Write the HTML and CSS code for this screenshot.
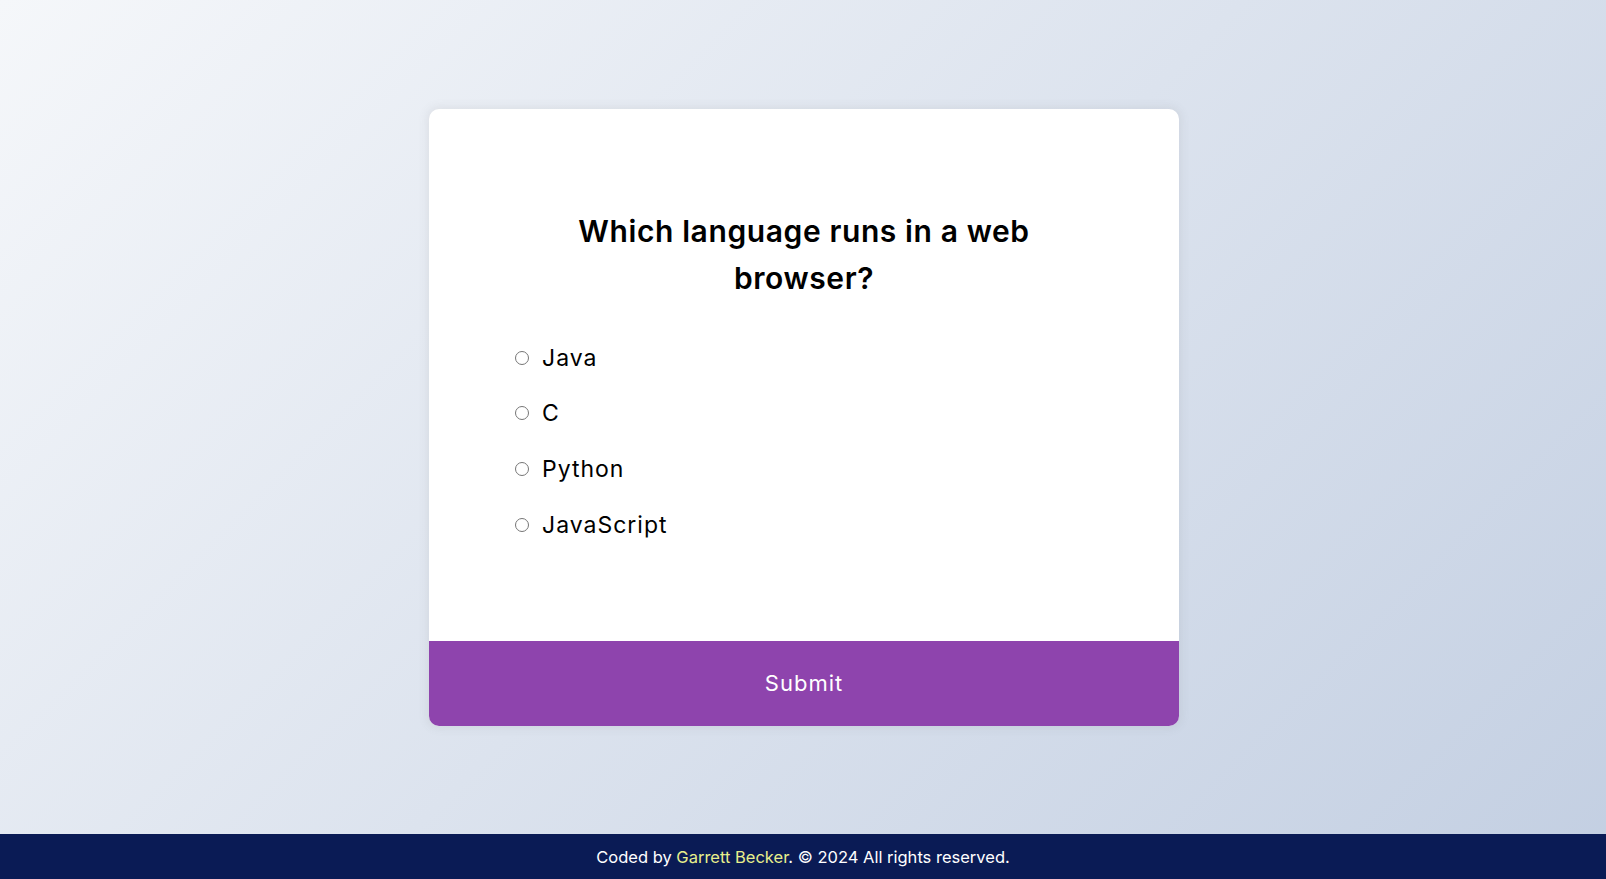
FILE: index.html
```html
<!DOCTYPE html>
<html lang="en">
<head>
<meta charset="UTF-8">
<title>Quiz App</title>
<link rel="stylesheet" href="styles.css">
</head>
<body>
<main class="page">
  <div class="quiz-card">
    <div class="quiz-header">
      <h2 class="question">Which language runs in a web browser?</h2>
      <ul class="answers">
        <li class="answer"><input type="radio" name="answer" id="a"><label for="a">Java</label></li>
        <li class="answer"><input type="radio" name="answer" id="b"><label for="b">C</label></li>
        <li class="answer"><input type="radio" name="answer" id="c"><label for="c">Python</label></li>
        <li class="answer"><input type="radio" name="answer" id="d"><label for="d">JavaScript</label></li>
      </ul>
    </div>
    <button class="submit">Submit</button>
  </div>
</main>
<footer class="footer">
  <p class="footer-text">Coded by <a class="author" href="#">Garrett Becker</a>. © 2024 All rights reserved.</p>
</footer>
</body>
</html>
```

FILE: styles.css
```css
* { box-sizing: border-box; }
html, body { height: 100%; }
body {
  margin: 0;
  font-family: "Inter", "Open Sans", sans-serif;
  background: linear-gradient(135deg, #f5f7fa 0%, #c3cfe2 100%);
  display: flex;
  flex-direction: column;
  min-height: 100vh;
}
.page {
  flex: 1;
  display: flex;
  align-items: center;
  justify-content: center;
}
.quiz-card {
  width: 750px;
  margin-left: 2px;
  background: #fff;
  border-radius: 10px;
  box-shadow: 0 0 10px 2px rgba(100, 100, 100, 0.1);
  overflow: hidden;
}
.quiz-header {
  height: 532px;
  padding: 99px 86px 0;
}
.question {
  margin: 0 auto;
  max-width: 500px;
  text-align: center;
  font-size: 30px;
  line-height: 47px;
  font-weight: 600;
  letter-spacing: 0.6px;
  color: #000;
}
.answers {
  list-style: none;
  margin: 38px 0 0;
  padding: 0;
  display: flex;
  flex-direction: column;
  gap: 19.7px;
}
.answer {
  display: flex;
  align-items: center;
  height: 36px;
  font-size: 23px;
  letter-spacing: 1px;
  color: #000;
}
.answer input {
  width: 14px;
  height: 14px;
  margin: 0 13px 0 0;
}
.submit {
  display: block;
  width: 100%;
  height: 85px;
  border: none;
  background: #8e44ad;
  color: #fff;
  font-family: inherit;
  font-size: 22px;
  letter-spacing: 1px;
  cursor: pointer;
}
.footer {
  height: 45px;
  background: #0a1b55;
  display: flex;
  align-items: center;
  justify-content: center;
}
.footer-text {
  margin: 0;
  color: #fff;
  font-size: 16.5px;
}
.author {
  color: #e8ef8c;
  text-decoration: none;
}
```
